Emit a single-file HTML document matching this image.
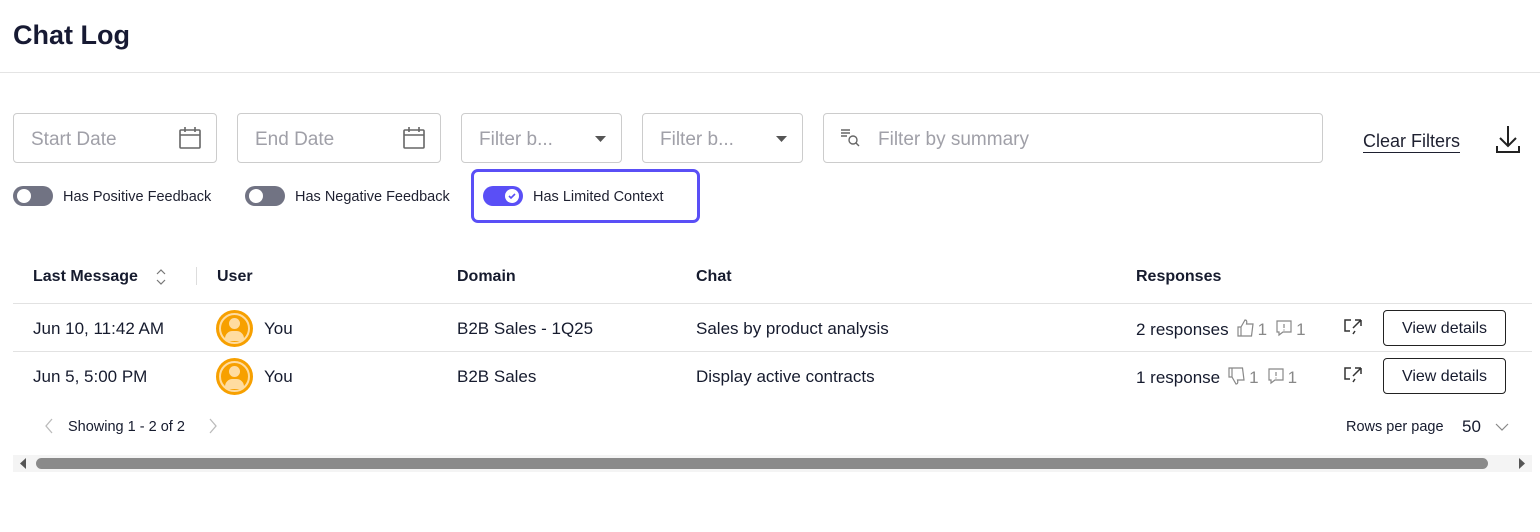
<!DOCTYPE html>
<html><head><meta charset="utf-8"><style>
*{box-sizing:border-box;margin:0;padding:0}
body{width:1540px;height:532px;background:#fff;font-family:"Liberation Sans",sans-serif;color:#161b2e;position:relative;overflow:hidden}
.a{position:absolute}
.inp{position:absolute;top:113px;height:50px;border:1px solid #ccc;border-radius:4px;color:#a0a0a8;font-size:19px;line-height:52px;padding-left:17px}
.tog{position:absolute;width:40px;height:20px;border-radius:10px;background:#717383}
.tog.off::after{content:"";position:absolute;left:4px;top:3px;width:14px;height:14px;border-radius:50%;background:#fff}
.tl{position:absolute;font-size:14.5px;top:189px;color:#1e2030}
.th{position:absolute;top:268px;font-size:16px;font-weight:bold}
.td{position:absolute;font-size:17px}
.hr{position:absolute;left:13px;width:1519px;height:1px;background:#e2e2e2}
.av{position:absolute;left:216px;width:37px;height:37px;border-radius:50%;background:#f7a000;overflow:hidden}
.av::before{content:"";position:absolute;left:3px;top:3px;width:31px;height:31px;border-radius:50%;border:2px solid #ffdca0;box-sizing:border-box}
.av i{position:absolute;left:13px;top:8px;width:11px;height:11px;border-radius:50%;background:#ffdca0}
.av b{position:absolute;left:9px;top:21px;width:19px;height:10px;border-radius:9px 9px 3px 3px;background:#ffdca0}
.btn{position:absolute;left:1383px;width:123px;height:36px;border:1px solid #222;border-radius:4px;font-size:16px;text-align:center;line-height:36px}
.g{color:#888}
.ic{display:inline-block;vertical-align:-2px;margin:0 3px 0 8px}
</style></head><body>
<div class="a" style="left:13px;top:20px;font-size:27px;font-weight:bold;color:#171a33">Chat Log</div>
<div class="a" style="left:0;top:72px;width:1540px;height:1px;background:#e4e4e4"></div>

<div class="inp" style="left:13px;width:204px">Start Date
<svg class="a" style="right:14px;top:12px" width="24" height="24" viewBox="0 0 24 24" fill="none" stroke="#666" stroke-width="1.6"><rect x="2" y="4" width="20" height="18" rx="1"/><path d="M2 9h20M7 1v5M17 1v5"/></svg></div>
<div class="inp" style="left:237px;width:204px">End Date
<svg class="a" style="right:14px;top:12px" width="24" height="24" viewBox="0 0 24 24" fill="none" stroke="#666" stroke-width="1.6"><rect x="2" y="4" width="20" height="18" rx="1"/><path d="M2 9h20M7 1v5M17 1v5"/></svg></div>
<div class="inp" style="left:461px;width:161px">Filter b...
<svg class="a" style="right:14px;top:21px" width="12" height="8"><path d="M0 1h11L5.5 7z" fill="#555"/></svg></div>
<div class="inp" style="left:642px;width:161px">Filter b...
<svg class="a" style="right:14px;top:21px" width="12" height="8"><path d="M0 1h11L5.5 7z" fill="#555"/></svg></div>
<div class="inp" style="left:823px;width:500px;padding-left:54px">Filter by summary
<svg class="a" style="left:16px;top:14px" width="22" height="20" viewBox="0 0 22 20" fill="none" stroke="#666" stroke-width="1.4"><path d="M1 2h9M1 5h9M1 8h6"/><circle cx="13" cy="12" r="4"/><path d="M16 15l3 3"/></svg></div>
<div class="a" style="left:1363px;top:130px;font-size:18px;color:#1e2030;border-bottom:1px solid #1e2030;line-height:22px">Clear Filters</div>
<svg class="a" style="left:1494px;top:124px" width="28" height="30" viewBox="0 0 28 30" fill="none" stroke="#222" stroke-width="2"><path d="M14 2v20M6 14l8 8 8-8M3 22v6h22v-6"/></svg>

<div class="tog off" style="left:13px;top:186px"></div><div class="tl" style="left:63px">Has Positive Feedback</div>
<div class="tog off" style="left:245px;top:186px"></div><div class="tl" style="left:295px">Has Negative Feedback</div>
<div class="a" style="left:471px;top:169px;width:229px;height:54px;border:3px solid #5a4ff6;border-radius:7px"></div>
<div class="tog" style="left:483px;top:186px;background:#5a4ff6"></div>
<div class="a" style="left:505px;top:189px;width:14px;height:14px;border-radius:50%;background:#fff"><svg width="14" height="14"><path d="M4 7l2 2 4-4" stroke="#5a4ff6" stroke-width="1.6" fill="none"/></svg></div>
<div class="tl" style="left:533px">Has Limited Context</div>

<div class="th" style="left:33px">Last Message</div>
<svg class="a" style="left:155px;top:268px" width="12" height="18" viewBox="0 0 12 18" fill="none" stroke="#777" stroke-width="1.2"><path d="M2 6l4-4 4 4M2 12l4 4 4-4"/></svg>
<div class="a" style="left:196px;top:267px;width:1px;height:18px;background:#ddd"></div>
<div class="th" style="left:217px">User</div>
<div class="th" style="left:457px">Domain</div>
<div class="th" style="left:696px">Chat</div>
<div class="th" style="left:1136px">Responses</div>
<div class="hr" style="top:303px"></div>
<div class="hr" style="top:351px"></div>

<div class="td" style="left:33px;top:319px">Jun 10, 11:42 AM</div>
<div class="av" style="top:310px"><i></i><b></b></div>
<div class="td" style="left:264px;top:319px">You</div>
<div class="td" style="left:457px;top:319px">B2B Sales - 1Q25</div>
<div class="td" style="left:696px;top:319px">Sales by product analysis</div>
<div class="td g" style="left:1136px;top:319px"><span style="color:#161b2e">2 responses</span><svg class="ic" width="18" height="18" viewBox="0 0 18 18" fill="none" stroke="#888" stroke-width="1.2"><path d="M1 8h3v9H1zM4 8l4-7c2 0 2 2 1.5 4H16l-1.5 12H4"/></svg>1<svg class="ic" width="18" height="18" viewBox="0 0 18 18" fill="none" stroke="#888" stroke-width="1.2"><path d="M2 2h14v11H8l-4 3v-3H2z"/><path d="M9 5v4M9 10.5v1"/></svg>1</div>
<svg class="a" style="left:1343px;top:318px" width="20" height="18" viewBox="0 0 20 18" fill="none" stroke="#333" stroke-width="1.5"><path d="M8 2H2v11h5M12 2h6M18 2v6M18 2l-8 8M10 16l2-3"/></svg>
<div class="btn" style="top:310px">View details</div>

<div class="td" style="left:33px;top:367px">Jun 5, 5:00 PM</div>
<div class="av" style="top:358px"><i></i><b></b></div>
<div class="td" style="left:264px;top:367px">You</div>
<div class="td" style="left:457px;top:367px">B2B Sales</div>
<div class="td" style="left:696px;top:367px">Display active contracts</div>
<div class="td g" style="left:1136px;top:367px"><span style="color:#161b2e">1 response</span><svg class="ic" width="18" height="18" viewBox="0 0 18 18" fill="none" stroke="#888" stroke-width="1.2"><path d="M1 1h3v9H1zM4 10l4 7c2 0 2-2 1.5-4H16L14.5 1H4"/></svg>1<svg class="ic" width="18" height="18" viewBox="0 0 18 18" fill="none" stroke="#888" stroke-width="1.2"><path d="M2 2h14v11H8l-4 3v-3H2z"/><path d="M9 5v4M9 10.5v1"/></svg>1</div>
<svg class="a" style="left:1343px;top:366px" width="20" height="18" viewBox="0 0 20 18" fill="none" stroke="#333" stroke-width="1.5"><path d="M8 2H2v11h5M12 2h6M18 2v6M18 2l-8 8M10 16l2-3"/></svg>
<div class="btn" style="top:358px">View details</div>

<svg class="a" style="left:44px;top:418px" width="10" height="16"><path d="M8 1L2 8l6 7" stroke="#bbb" fill="none" stroke-width="1.3"/></svg>
<div class="a" style="left:68px;top:419px;font-size:14.5px">Showing 1 - 2 of 2</div>
<svg class="a" style="left:208px;top:418px" width="10" height="16"><path d="M2 1l6 7-6 7" stroke="#bbb" fill="none" stroke-width="1.3"/></svg>
<div class="a" style="left:1346px;top:419px;font-size:14.5px">Rows per page</div>
<div class="a" style="left:1462px;top:417px;font-size:17px">50</div>
<svg class="a" style="left:1495px;top:422px" width="14" height="10"><path d="M1 2l6 6 6-6" stroke="#888" fill="none" stroke-width="1.2"/></svg>

<div class="a" style="left:13px;top:455px;width:1519px;height:17px;background:#f4f4f4"></div>
<svg class="a" style="left:19px;top:458px" width="8" height="11"><path d="M7 0v11L1 5.5z" fill="#555"/></svg>
<div class="a" style="left:36px;top:458px;width:1452px;height:11px;border-radius:6px;background:#8a8a8a"></div>
<svg class="a" style="left:1518px;top:458px" width="8" height="11"><path d="M1 0v11l6-5.5z" fill="#555"/></svg>
</body></html>
